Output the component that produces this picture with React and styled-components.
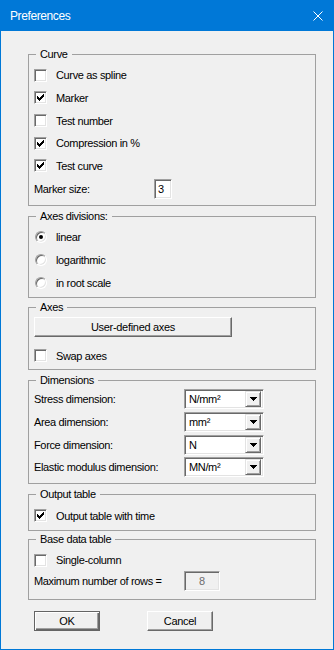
import React from 'react';
import styled, { createGlobalStyle } from 'styled-components';

const GlobalStyle = createGlobalStyle`
  html, body {
    margin: 0;
    padding: 0;
    background: #f0f0f0;
  }
  body {
    font-family: "Liberation Sans", Arial, sans-serif;
    font-size: 11px;
    color: #000;
  }
`;

const Window = styled.div`
  width: 334px;
  height: 650px;
  box-sizing: border-box;
  border: 1px solid #0078d7;
  border-top: 0;
  display: flex;
  flex-direction: column;
  background: #f0f0f0;
`;

const TitleBar = styled.div`
  height: 31px;
  flex: none;
  display: flex;
  align-items: center;
  background: #0078d7;
  padding-left: 9px;
`;

const Title = styled.span`
  color: #fff;
  font-size: 12px;
  letter-spacing: -0.4px;
`;

const CloseBtn = styled.div`
  margin-left: auto;
  width: 30px;
  height: 31px;
  display: flex;
  align-items: center;
  justify-content: center;
`;

const Body = styled.div`
  flex: 1;
  padding: 17px 17px 0 27px;
  display: flex;
  flex-direction: column;
`;

const Group = styled.fieldset`
  margin: 0 0 ${(p) => p.$mb ?? 4}px;
  padding: ${(p) => p.$pt}px 0 ${(p) => p.$pb}px 5px;
  border: 1px solid #a0a0a0;
  min-width: 0;
  display: flex;
  flex-direction: column;
`;

const Legend = styled.legend`
  margin-left: 2px;
  padding: 0 4px;
  line-height: 13px;
  letter-spacing: -0.35px;
`;

const Row = styled.div`
  display: flex;
  align-items: center;
  height: ${(p) => p.$h ?? 22.667}px;
  margin-top: ${(p) => p.$mt ?? 0}px;
`;

const Text = styled.span`
  letter-spacing: -0.35px;
  white-space: nowrap;
  margin-left: ${(p) => p.$ml ?? 0}px;
`;

const FieldLabel = styled(Text)`
  width: ${(p) => p.$w}px;
  flex: none;
`;

const sunken = `
  box-sizing: border-box;
  border: 1px solid;
  border-color: #a0a0a0 #fff #fff #a0a0a0;
  box-shadow: inset 1px 1px #696969, inset -1px -1px #e3e3e3;
`;

const Box = styled.span`
  ${sunken}
  width: 13px;
  height: 13px;
  flex: none;
  background: #fff;
  display: flex;
  align-items: center;
  justify-content: center;
`;

const RadioCircle = styled.span`
  box-sizing: border-box;
  width: 12px;
  height: 12px;
  margin-left: 1px;
  flex: none;
  border-radius: 50%;
  border: 1px solid;
  border-color: #a0a0a0 #fff #fff #a0a0a0;
  box-shadow: inset 1px 1px #696969, inset -1px -1px #e3e3e3;
  background: #fff;
  display: flex;
  align-items: center;
  justify-content: center;
`;

const Dot = styled.span`
  width: 4px;
  height: 4px;
  border-radius: 50%;
  background: #000;
`;

const Button = styled.button`
  box-sizing: border-box;
  width: ${(p) => p.$w}px;
  height: 20px;
  padding: 0;
  font-family: inherit;
  font-size: 11px;
  letter-spacing: -0.3px;
  color: #000;
  background: #f0f0f0;
  border: 1px solid;
  border-color: ${(p) => (p.$default ? '#646464' : '#fff #696969 #696969 #fff')};
  box-shadow: ${(p) =>
    p.$default
      ? 'inset 1px 1px #fff, inset -1px -1px #696969, inset -2px -2px #a0a0a0'
      : 'inset -1px -1px #a0a0a0, inset 1px 1px #f0f0f0'};
  flex: none;
`;

const TextBox = styled.div`
  ${sunken}
  width: ${(p) => p.$w}px;
  height: 20px;
  flex: none;
  display: flex;
  align-items: center;
  justify-content: ${(p) => (p.$disabled ? 'center' : 'flex-start')};
  padding-left: ${(p) => (p.$disabled ? 0 : 3)}px;
  background: ${(p) => (p.$disabled ? '#f0f0f0' : '#fff')};
  color: ${(p) => (p.$disabled ? '#6d6d6d' : '#000')};
`;

const ComboBox = styled.div`
  ${sunken}
  width: 80px;
  height: 20px;
  flex: none;
  display: flex;
  align-items: center;
  padding: 2px;
  background: #fff;
`;

const ComboValue = styled.span`
  flex: 1;
  padding-left: 2px;
  letter-spacing: -0.35px;
`;

const DropButton = styled.span`
  box-sizing: border-box;
  width: 16px;
  height: 16px;
  background: #f0f0f0;
  border: 1px solid;
  border-color: #e3e3e3 #696969 #696969 #e3e3e3;
  box-shadow: inset 1px 1px #fff, inset -1px -1px #a0a0a0;
  display: flex;
  align-items: center;
  justify-content: center;
`;

const ButtonRow = styled.div`
  display: flex;
  margin-top: 11px;
  padding-left: 6px;
  gap: 47px;
`;

const CheckMark = () => (
  <svg width="7" height="7" viewBox="0 0 7 7" shapeRendering="crispEdges">
    <path
      fill="#000"
      d="M6 0h1v1h-1zM5 1h2v1h-2zM0 2h1v1h-1zM4 2h3v1h-3zM0 3h2v1h-2zM3 3h3v1h-3zM0 4h5v1h-5zM1 5h3v1h-3zM2 6h1v1h-1z"
    />
  </svg>
);

const Check = ({ checked, label, mt }) => (
  <Row $mt={mt}>
    <Box>{checked && <CheckMark />}</Box>
    <Text $ml={9}>{label}</Text>
  </Row>
);

const Radio = ({ checked, label }) => (
  <Row>
    <RadioCircle>{checked && <Dot />}</RadioCircle>
    <Text $ml={9}>{label}</Text>
  </Row>
);

const Combo = ({ label, value }) => (
  <Row>
    <FieldLabel $w={150}>{label}</FieldLabel>
    <ComboBox>
      <ComboValue>{value}</ComboValue>
      <DropButton>
        <svg width="7" height="4" viewBox="0 0 7 4" shapeRendering="crispEdges">
          <path fill="#000" d="M0 0h7v1h-7zM1 1h5v1h-5zM2 2h3v1h-3zM3 3h1v1h-1z" />
        </svg>
      </DropButton>
    </ComboBox>
  </Row>
);

const dimensions = [
  ['Stress dimension:', 'N/mm²'],
  ['Area dimension:', 'mm²'],
  ['Force dimension:', 'N'],
  ['Elastic modulus dimension:', 'MN/m²'],
];

export default function App() {
  return (
    <>
      <GlobalStyle />
      <Window>
        <TitleBar>
          <Title>Preferences</Title>
          <CloseBtn>
            <svg width="10" height="10" viewBox="0 0 10 10">
              <path d="M0.5 0.5L9.5 9.5M9.5 0.5L0.5 9.5" stroke="#fff" strokeWidth="1" />
            </svg>
          </CloseBtn>
        </TitleBar>
        <Body>
          <Group $pt={3} $pb={5}>
            <Legend>Curve</Legend>
            <Check label="Curve as spline" />
            <Check checked label="Marker" />
            <Check label="Test number" />
            <Check checked label="Compression in %" />
            <Check checked label="Test curve" />
            <Row>
              <FieldLabel $w={120}>Marker size:</FieldLabel>
              <TextBox $w={18}>3</TextBox>
            </Row>
          </Group>

          <Group $pt={3} $pb={3} $mb={3}>
            <Legend>Axes divisions:</Legend>
            <Radio checked label="linear" />
            <Radio label="logarithmic" />
            <Radio label="in root scale" />
          </Group>

          <Group $pt={3} $pb={2}>
            <Legend>Axes</Legend>
            <Row $h={20}>
              <Button $w={198}>User-defined axes</Button>
            </Row>
            <Check label="Swap axes" mt={7.333} />
          </Group>

          <Group $pt={1} $pb={4.333}>
            <Legend>Dimensions</Legend>
            {dimensions.map(([label, value]) => (
              <Combo key={label} label={label} value={value} />
            ))}
          </Group>

          <Group $pt={3.667} $pb={2.667} $mb={2}>
            <Legend>Output table</Legend>
            <Check checked label="Output table with time" />
          </Group>

          <Group $pt={3} $pb={7.333} $mb={0}>
            <Legend>Base data table</Legend>
            <Check label="Single-column" />
            <Row $h={20}>
              <FieldLabel $w={150}>Maximum number of rows =</FieldLabel>
              <TextBox $w={36} $disabled>8</TextBox>
            </Row>
          </Group>

          <ButtonRow>
            <Button $w={66} $default>OK</Button>
            <Button $w={66}>Cancel</Button>
          </ButtonRow>
        </Body>
      </Window>
    </>
  );
}
